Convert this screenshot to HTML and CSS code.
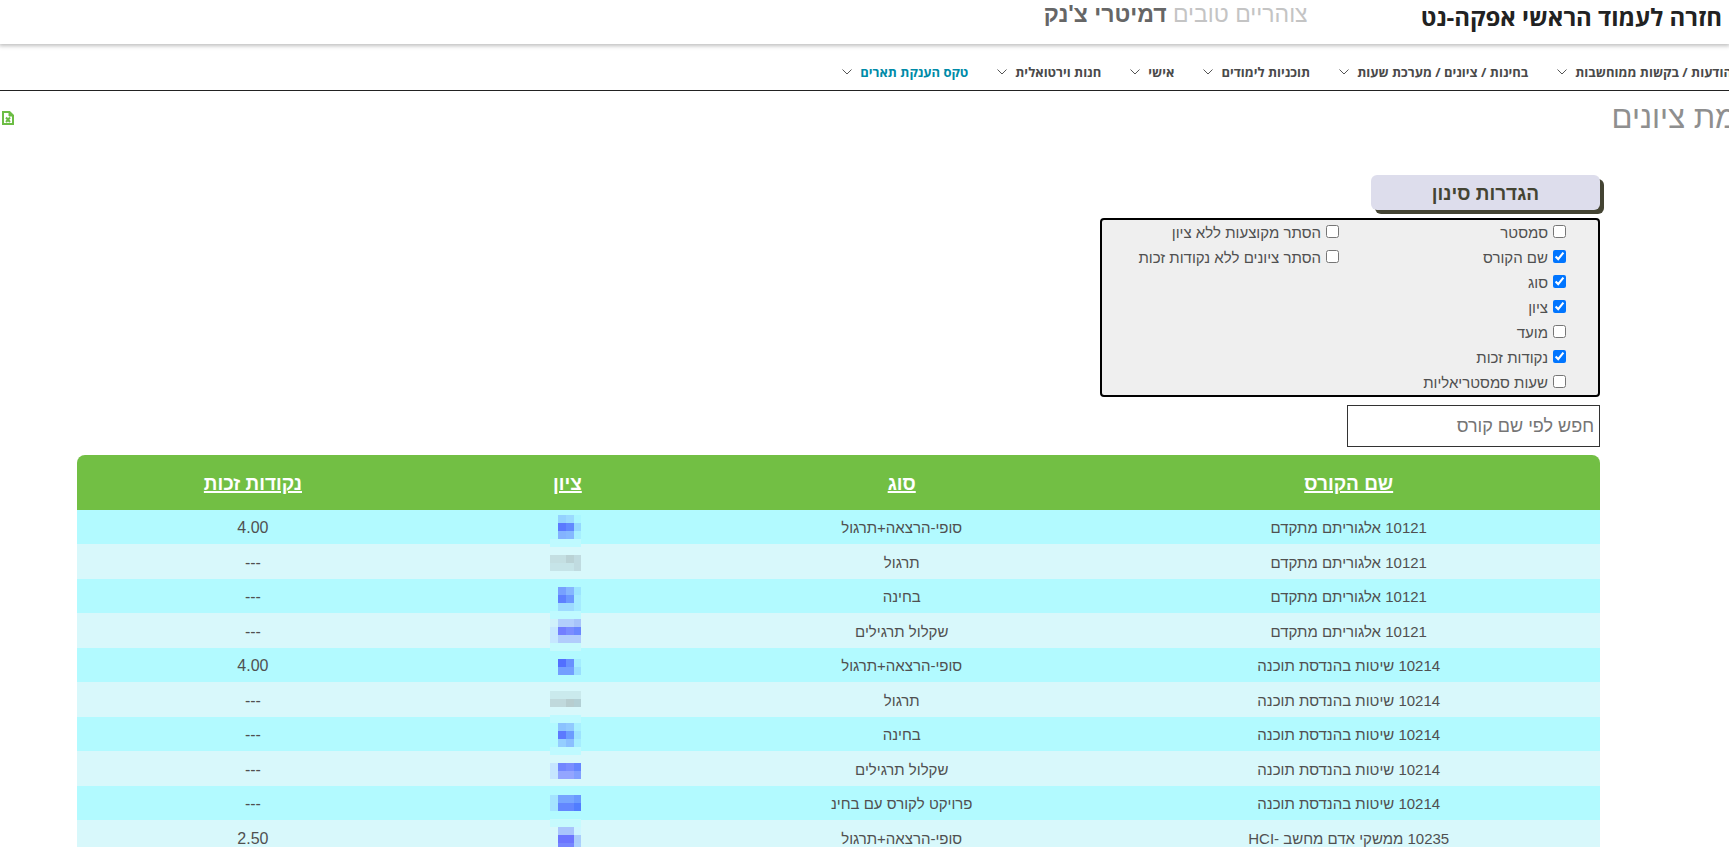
FILE: index.html
```html
<!DOCTYPE html>
<html lang="he" dir="rtl">
<head>
<meta charset="utf-8">
<title>רשימת ציונים</title>
<link rel="stylesheet" href="styles.css">
</head>
<body>
<header class="topbar">
  <a class="back" href="#">חזרה לעמוד הראשי אפקה-נט</a>
  <p class="greeting">צוהריים טובים <strong>דמיטרי צ'נק</strong></p>
</header>
<nav class="menu">
  <a href="#">הודעות / בקשות ממוחשבות<svg viewBox="0 0 10 6"><path d="M.5.5 5 5 9.5.5"/></svg></a>
  <a href="#">בחינות / ציונים / מערכת שעות<svg viewBox="0 0 10 6"><path d="M.5.5 5 5 9.5.5"/></svg></a>
  <a href="#">תוכניות לימודים<svg viewBox="0 0 10 6"><path d="M.5.5 5 5 9.5.5"/></svg></a>
  <a href="#">אישי<svg viewBox="0 0 10 6"><path d="M.5.5 5 5 9.5.5"/></svg></a>
  <a href="#">חנות וירטואלית<svg viewBox="0 0 10 6"><path d="M.5.5 5 5 9.5.5"/></svg></a>
  <a href="#" class="accent">טקס הענקת תארים<svg viewBox="0 0 10 6"><path d="M.5.5 5 5 9.5.5"/></svg></a>
</nav>
<div class="titlebar">
  <h1>רשימת ציונים</h1>
  <button class="export" type="button" aria-label="Excel"><svg viewBox="0 0 12 14"><path class="page" d="M2 1h5.500L11 4.500V13H1V1Z"/><path class="fold" d="M7 1v4h4z"/><path class="x" d="m4 6.500 4 4.500M8 6.500 4 11"/></svg></button>
</div>
<main class="content">
  <button class="filter-toggle" type="button">הגדרות סינון</button>
  <div class="filters">
    <div class="group columns">
      <label><input type="checkbox">סמסטר</label>
      <label><input type="checkbox" checked>שם הקורס</label>
      <label><input type="checkbox" checked>סוג</label>
      <label><input type="checkbox" checked>ציון</label>
      <label><input type="checkbox">מועד</label>
      <label><input type="checkbox" checked>נקודות זכות</label>
      <label><input type="checkbox">שעות סמסטריאליות</label>
    </div>
    <div class="group">
      <label><input type="checkbox">הסתר מקוצעות ללא ציון</label>
      <label><input type="checkbox">הסתר ציונים ללא נקודות זכות</label>
    </div>
  </div>
  <input class="search" type="text" placeholder="חפש לפי שם קורס" aria-label="חפש לפי שם קורס">
  <table class="grades">
    <colgroup><col class="c-course"><col class="c-type"><col class="c-grade"><col class="c-points"></colgroup>
    <thead><tr><th><a href="#">שם הקורס</a></th><th><a href="#">סוג</a></th><th><a href="#">ציון</a></th><th><a href="#">נקודות זכות</a></th></tr></thead>
    <tbody>
      <tr><td>10121 אלגוריתם מתקדם</td><td>סופי-הרצאה+תרגול</td><td class="masked">
        <svg class="mosaic" viewBox="0 0 31 332" shape-rendering="crispEdges">
          <path fill="#94d2ff" d="M8 0h8v8H8z"/><path fill="#9bdaff" d="M16 0h8v8h-8z"/><path fill="#aaf6ff" d="M24 0h7v8h-7z"/>
          <path fill="#5b79ff" d="M8 8h8v8H8z"/><path fill="#6289ff" d="M16 8h8v8h-8z"/><path fill="#95d8ff" d="M24 8h7v8h-7z"/>
          <path fill="#83b3ff" d="M8 16h8v8H8z"/><path fill="#85b8ff" d="M16 16h8v8h-8z"/><path fill="#a7efff" d="M24 16h7v8h-7z"/>
          <path fill="#bffaff" d="M0 24h31v8H0z"/>
          <path fill="#c4dfe2" d="M0 40h16v8H0z"/><path fill="#bad2d5" d="M16 40h8v8h-8z"/><path fill="#c0dbe0" d="M24 40h7v16h-7z"/>
          <path fill="#c6e4e8" d="M0 48h24v8H0z"/>
          <path fill="#77a0ff" d="M8 72h8v8H8z"/><path fill="#85b5ff" d="M16 72h8v8h-8z"/><path fill="#9ce4ff" d="M24 72h7v8h-7z"/>
          <path fill="#5e80ff" d="M8 80h8v8H8z"/><path fill="#6c98ff" d="M16 80h8v8h-8z"/><path fill="#a5ebff" d="M24 80h7v16h-7z"/>
          <path fill="#9edbff" d="M8 88h16v8H8z"/>
          <path fill="#bffaff" d="M0 96h31v8H0z"/>
          <path fill="#d0f1fb" d="M0 104h8v8H0z"/><path fill="#b3cffc" d="M8 104h16v8H8z"/><path fill="#a8c4fa" d="M24 104h7v8h-7z"/>
          <path fill="#c6e7ff" d="M0 112h8v16H0z"/><path fill="#737eff" d="M8 112h8v8H8z"/><path fill="#7a8cff" d="M16 112h8v8h-8z"/><path fill="#6a87ff" d="M24 112h7v8h-7z"/>
          <path fill="#b1ccfc" d="M8 120h23v8H8z"/><path fill="#c6fafd" d="M0 128h31v8H0z"/>
          <path fill="#526fff" d="M8 144h8v8H8z"/><path fill="#6890ff" d="M16 144h8v8h-8z"/><path fill="#a4edff" d="M24 144h7v8h-7z"/>
          <path fill="#739fff" d="M8 152h16v8H8z"/><path fill="#9adfff" d="M24 152h7v8h-7z"/>
          <path fill="#caeaed" d="M0 176h31v8H0z"/><path fill="#c0d9dc" d="M0 184h16v8H0z"/><path fill="#b7cdcf" d="M16 184h8v8h-8z"/><path fill="#b3d0d5" d="M24 184h7v8h-7z"/>
          <path fill="#bffaff" d="M0 200h31v8H0z"/>
          <path fill="#8bc3ff" d="M8 208h8v8H8z"/><path fill="#91caff" d="M16 208h8v8h-8z"/><path fill="#a8f0ff" d="M24 208h7v8h-7z"/>
          <path fill="#5c79ff" d="M8 216h8v8H8z"/><path fill="#6c9cff" d="M16 216h8v8h-8z"/><path fill="#9de3ff" d="M24 216h7v8h-7z"/>
          <path fill="#95ceff" d="M8 224h8v8H8z"/><path fill="#8bbfff" d="M16 224h8v8h-8z"/><path fill="#a6edff" d="M24 224h7v8h-7z"/>
          <path fill="#bffaff" d="M0 232h31v8H0z"/>
          <path fill="#c6e6ff" d="M0 248h8v16H0z"/><path fill="#7287ff" d="M8 248h8v8H8z"/><path fill="#7a8eff" d="M16 248h8v8h-8z"/><path fill="#6586ff" d="M24 248h7v8h-7z"/>
          <path fill="#93a5ff" d="M8 256h16v8H8z"/><path fill="#819fff" d="M24 256h7v8h-7z"/>
          <path fill="#a4e4ff" d="M0 280h8v16H0z"/><path fill="#76a5ff" d="M8 280h16v8H8z"/><path fill="#699aff" d="M24 280h7v8h-7z"/>
          <path fill="#6387ff" d="M8 288h16v8H8z"/><path fill="#517dff" d="M24 288h7v8h-7z"/>
          <path fill="#c6fafd" d="M0 304h31v8H0z"/><path fill="#a9c4fc" d="M8 312h16v8H8z"/><path fill="#cdf5ff" d="M24 312h7v8h-7z"/>
          <path fill="#6c75ff" d="M8 320h16v8H8z"/><path fill="#aacdfb" d="M24 320h7v8h-7z"/><path fill="#7686ff" d="M8 328h16v4H8z"/><path fill="#abd0fd" d="M24 328h7v4h-7z"/>
        </svg></td><td>4.00</td></tr>
      <tr><td>10121 אלגוריתם מתקדם</td><td>תרגול</td><td></td><td>---</td></tr>
      <tr><td>10121 אלגוריתם מתקדם</td><td>בחינה</td><td></td><td>---</td></tr>
      <tr><td>10121 אלגוריתם מתקדם</td><td>שקלול תרגילים</td><td></td><td>---</td></tr>
      <tr><td>10214 שיטות בהנדסת תוכנה</td><td>סופי-הרצאה+תרגול</td><td></td><td>4.00</td></tr>
      <tr><td>10214 שיטות בהנדסת תוכנה</td><td>תרגול</td><td></td><td>---</td></tr>
      <tr><td>10214 שיטות בהנדסת תוכנה</td><td>בחינה</td><td></td><td>---</td></tr>
      <tr><td>10214 שיטות בהנדסת תוכנה</td><td>שקלול תרגילים</td><td></td><td>---</td></tr>
      <tr><td>10214 שיטות בהנדסת תוכנה</td><td>פרויקט לקורס עם בחינ</td><td></td><td>---</td></tr>
      <tr><td>10235 ממשקי אדם מחשב -<bdi>HCI</bdi></td><td>סופי-הרצאה+תרגול</td><td></td><td>2.50</td></tr>
    </tbody>
  </table>
</main>
</body>
</html>
```

FILE: styles.css
```css
* { box-sizing: border-box; }
html { height: 100%; }
body {
  margin: 0;
  height: 100%;
  overflow: hidden;
  background: #fff;
  color: #505050;
  font-family: "Open Sans", "Liberation Sans", sans-serif;
}
a { color: inherit; text-decoration: none; }
.topbar {
  display: flex;
  height: 44px;
  padding-inline-start: 7px;
  gap: 113px;
  box-shadow: 0 1px 4px 1px rgba(0, 0, 0, .25);
  white-space: nowrap;
}
.back { color: #222; font-size: 24px; font-weight: 700; line-height: 34px; }
.greeting { margin: 0; color: #c4c4c4; font-family: "Liberation Sans", Arial, sans-serif; font-size: 23px; line-height: 28px; }
.greeting strong { color: #666; font-weight: 700; }
.menu {
  display: flex;
  align-items: center;
  gap: 29px;
  height: 47px;
  margin-inline-start: -3px;
  padding-top: 10px;
  border-bottom: 1px solid #222;
  white-space: nowrap;
  color: #4a4a4a;
  font-size: 13px;
  font-weight: 700;
}
.menu a { display: flex; align-items: center; gap: 8px; }
.menu svg { width: 10px; height: 6px; fill: none; stroke: #555; }
.menu .accent { color: #008ba8; }
.titlebar {
  display: flex;
  justify-content: space-between;
  align-items: center;
  height: 54px;
  margin-inline-start: -54px;
  padding-inline-end: 2px;
}
h1 {
  margin: 0;
  color: #8f8f8f;
  font-family: "Liberation Sans", Arial, sans-serif;
  font-size: 31px;
  font-weight: 400;
  line-height: 40px;
}
.export { display: flex; padding: 0; border: 0; background: none; }
.export svg { width: 12px; height: 14px; fill: none; stroke: #6cbd45; }
.export .page { stroke-width: 2; }
.export .fold { fill: #6cbd45; }
.export .x { stroke-width: 2; }
.content {
  display: flex;
  flex-direction: column;
  align-items: flex-start;
  margin-inline: 129px 77px;
  padding-top: 30px;
}
.filter-toggle {
  width: 229px;
  height: 35px;
  margin-bottom: 8px;
  padding: 2px 0 0;
  border: 0;
  border-radius: 6px;
  background: #ddddec;
  box-shadow: 4px 4px 0 #443;
  color: #443;
  font: 700 19px "Liberation Sans", Arial, sans-serif;
}
.filters {
  display: flex;
  width: 500px;
  border: 2px solid #000;
  border-radius: 4px;
  background: #efefef;
  padding-inline-start: 32px;
}
.group { width: 220px; font-family: "Liberation Sans", Arial, sans-serif; font-size: 15px; }
.group label { display: flex; align-items: center; gap: 5px; height: 25px; white-space: nowrap; }
.group.columns { width: 227px; }
.group input { width: 13px; height: 13px; margin: 0 0 2px; }
.search {
  width: 253px;
  height: 42px;
  margin: 8px 0;
  padding: 0 5px;
  border: 1px solid #333;
  border-radius: 0;
  font: 18px "Liberation Sans", Arial, sans-serif;
}
.search::placeholder { color: #757575; }
.grades {
  width: 100%;
  table-layout: fixed;
  border-collapse: separate;
  border-spacing: 0;
  text-align: center;
  font-family: "Liberation Sans", Arial, sans-serif;
  font-size: 15px;
}
.c-course { width: 33%; }
.c-type { width: 25.7%; }
.c-grade { width: 18.2%; }
.c-points { width: 23.1%; }
.grades th {
  height: 55px;
  padding: 2px 0 0;
  background: #72bf44;
  color: #fff;
  font: 700 19px "Liberation Sans", Arial, sans-serif;
}
.grades th a { text-decoration: underline; text-decoration-thickness: 2px; }
.grades th:first-child { border-top-right-radius: 8px; }
.grades th:last-child { border-top-left-radius: 8px; }
.grades td { height: 34px; padding: 1px 0 0; background: #b2faff; }
.grades tr:nth-child(even) td { height: 35px; background: #d8f8fb; }
.grades td:last-child { padding-top: 2px; font-size: 16px; }
.grades .masked { position: relative; }
.mosaic {
  position: absolute;
  z-index: 1;
  top: 5px;
  left: calc(50% - 17px);
  width: 31px;
  height: 332px;
}
```
